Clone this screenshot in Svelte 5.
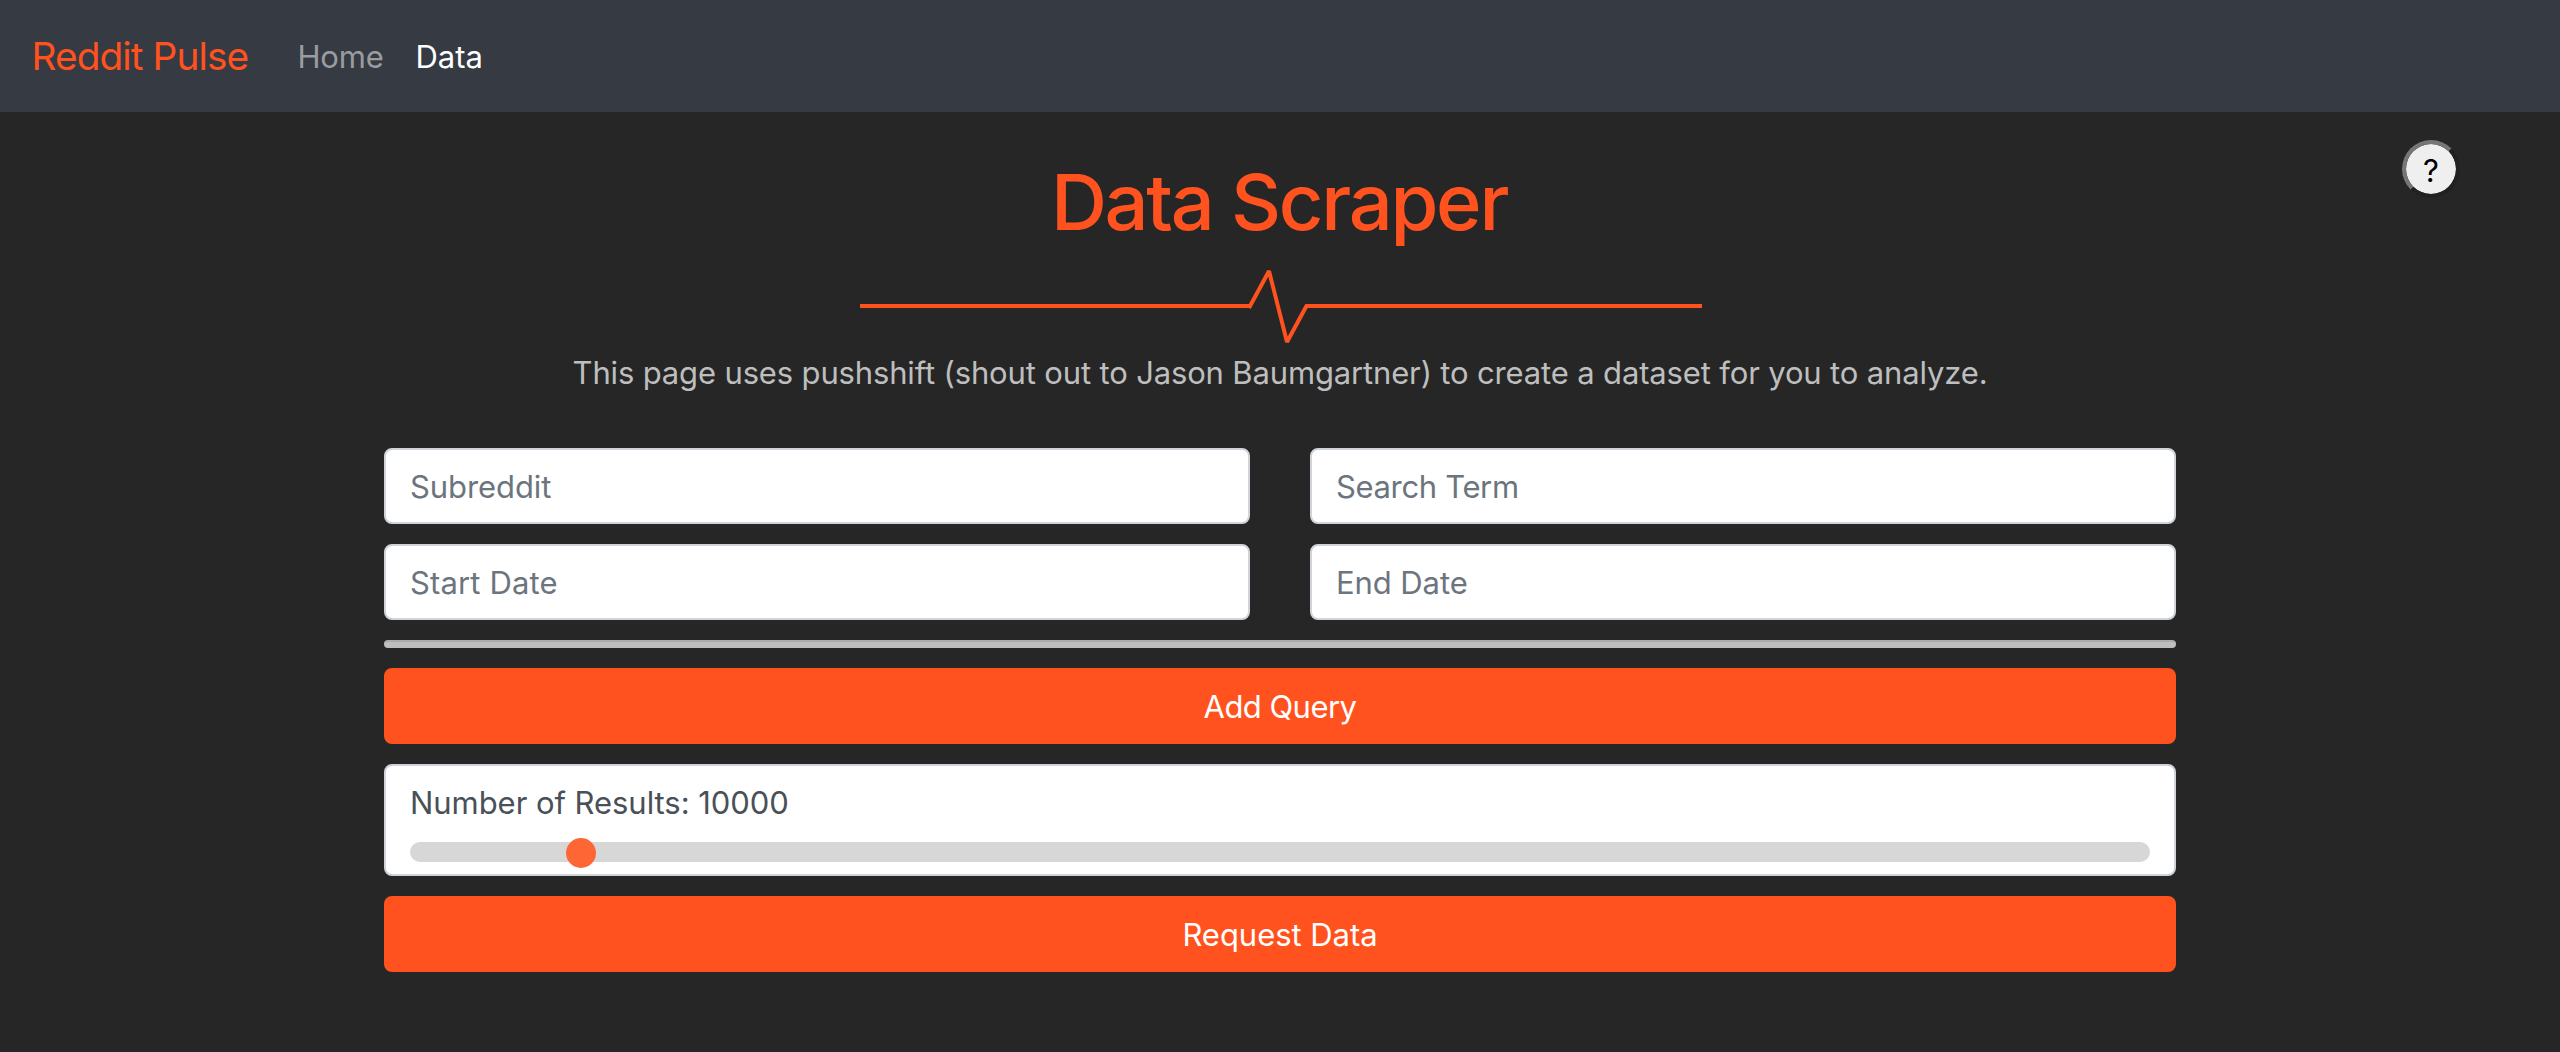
<script>
  let subreddit = $state('');
  let term = $state('');
  let start = $state('');
  let end = $state('');
  let results = $state(10000);
</script>

<nav class="navbar">
  <span class="brand">Reddit Pulse</span>
  <span class="link home">Home</span>
  <span class="link active">Data</span>
</nav>

<main>
  <button class="help" type="button" aria-label="Help">?</button>

  <header>
    <h1>Data Scraper</h1>
    <svg class="pulse" viewBox="0 0 842 89" aria-hidden="true">
      <path d="M0 46H389.5M389 48L409 11L427 82L447 45M446 46H842" />
    </svg>
    <p>This page uses pushshift (shout out to Jason Baumgartner) to create a dataset for you to analyze.</p>
  </header>

  <form onsubmit={(e) => e.preventDefault()}>
    <div class="grid">
      <input class="field" placeholder="Subreddit" bind:value={subreddit} />
      <input class="field term" placeholder="Search Term" bind:value={term} />
      <input class="field start" placeholder="Start Date" bind:value={start} />
      <input class="field" placeholder="End Date" bind:value={end} />
    </div>
    <div class="divider"></div>
    <button class="action add" type="button">Add Query</button>
    <div class="panel">
      <label for="results">Number of Results: {results}</label>
      <input id="results" type="range" min="960" max="100000" bind:value={results} />
    </div>
    <button class="action" type="submit">Request Data</button>
  </form>
</main>

<style>
  :global(html) {
    background: #262626;
  }
  :global(body) {
    margin: 0;
    background: #262626;
    font-family: Inter, 'Liberation Sans', sans-serif;
    font-size: 31px;
    line-height: 48px;
  }
  .navbar {
    box-sizing: border-box;
    height: 112px;
    padding: 0 32px;
    display: flex;
    align-items: center;
    background: #363a42;
  }
  .brand {
    width: 265.5px;
    font-size: 38.8px;
    letter-spacing: -0.92px;
    text-indent: -0.5px;
    white-space: nowrap;
    color: #ff521f;
  }
  .link {
    padding-top: 1px;
    color: #fff;
  }
  .home {
    width: 118px;
    letter-spacing: -0.2px;
    color: #9a9ca0;
  }
  main {
    position: relative;
    padding-top: 42px;
  }
  .help {
    position: absolute;
    top: 28px;
    right: 100px;
    box-sizing: border-box;
    width: 58px;
    height: 58px;
    padding: 3px 0 0;
    border: 4px solid;
    border-color: #767676 #212121 #212121 #767676;
    border-radius: 50%;
    background: #efefef;
    background-clip: padding-box;
    color: #000;
    font: 31px/48px Inter, sans-serif;
  }
  header {
    display: flex;
    flex-direction: column;
    align-items: center;
  }
  h1 {
    margin: 0 0 10px;
    padding-right: 2px;
    font-size: 77.6px;
    font-weight: 500;
    line-height: 96px;
    letter-spacing: -2.3px;
    color: #ff521f;
  }
  .pulse {
    display: block;
    width: 842px;
    height: 89px;
    margin-left: 2px;
  }
  .pulse path {
    fill: none;
    stroke: #ff521f;
    stroke-width: 4;
    stroke-linejoin: bevel;
  }
  p {
    margin: 0;
    letter-spacing: -0.15px;
    white-space: nowrap;
    color: #bebebe;
  }
  form {
    width: 1792px;
    margin: 51px auto 0;
    display: flex;
    flex-direction: column;
    gap: 20px;
  }
  .grid {
    display: grid;
    grid-template-columns: 1fr 1fr;
    gap: 20px 60px;
  }
  .field,
  .action {
    box-sizing: border-box;
    width: 100%;
    height: 76px;
    border-radius: 8px;
    font: inherit;
  }
  .field {
    min-width: 0;
    padding: 0 24px;
    border: 2px solid #ced4da;
    background: #fff;
    color: #495057;
    letter-spacing: -0.08px;
    outline: none;
  }
  .field::placeholder {
    color: #6c757d;
    opacity: 1;
  }
  .term {
    letter-spacing: -0.35px;
  }
  .start {
    letter-spacing: 0.14px;
  }
  .divider {
    box-sizing: border-box;
    height: 8px;
    border-top: 2px solid #ababab;
    border-radius: 4px;
    background: #bebebe;
  }
  .action {
    padding: 2px 0 0;
    border: 0;
    background: #ff521f;
    color: #fff;
    letter-spacing: -0.04px;
  }
  .add {
    letter-spacing: -0.55px;
  }
  .panel {
    box-sizing: border-box;
    height: 112px;
    padding: 13px 24px 0;
    border: 2px solid #ced4da;
    border-radius: 8px;
    background: #fff;
    color: #495057;
    letter-spacing: -0.05px;
  }
  label {
    display: block;
  }
  input[type='range'] {
    appearance: none;
    display: block;
    width: 100%;
    height: 20px;
    margin: 15px 0 0;
    border-radius: 10px;
    background: #d7d7d7;
    outline: none;
  }
  input[type='range']::-webkit-slider-thumb {
    appearance: none;
    width: 30px;
    height: 30px;
    margin-top: 2px;
    border-radius: 50%;
    background: #ff6636;
  }
</style>
